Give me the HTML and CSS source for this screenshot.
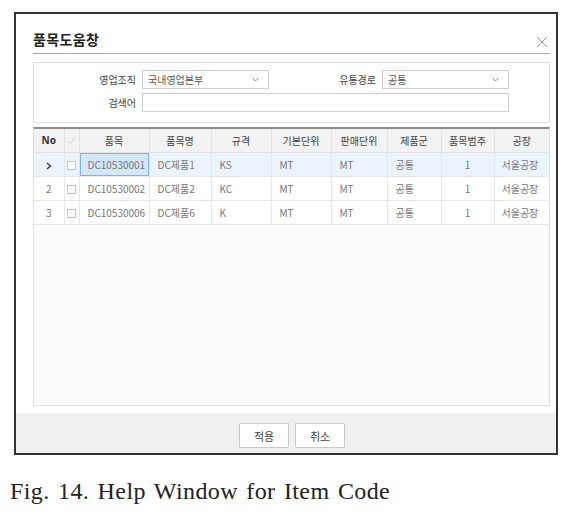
FILE: index.html
```html
<!DOCTYPE html>
<html lang="ko">
<head>
<meta charset="utf-8">
<title>품목도움창</title>
<link rel="stylesheet" href="styles.css">
</head>
<body>
<div class="dialog">
  <div class="head">
    <h1 class="title">품목도움창</h1>
    <svg class="close" width="12" height="12" viewBox="0 0 12 12"><path d="M1 1L11 11M11 1L1 11" stroke="#9a9a9a" stroke-width="1" fill="none"/></svg>
  </div>
  <div class="panel">
    <div class="form">
      <label class="lbl">영업조직</label>
      <div class="select"><span>국내영업본부</span><svg width="7" height="5" viewBox="0 0 7 5"><path d="M0.5 1L3.5 4L6.5 1" stroke="#888" fill="none"/></svg></div>
      <label class="lbl">유통경로</label>
      <div class="select"><span>공통</span><svg width="7" height="5" viewBox="0 0 7 5"><path d="M0.5 1L3.5 4L6.5 1" stroke="#888" fill="none"/></svg></div>
      <label class="lbl">검색어</label>
      <div class="input"></div>
    </div>
  </div>
  <div class="grid">
    <table>
      <colgroup>
        <col class="c-no"><col class="c-chk"><col class="c-code"><col class="c-name"><col class="c-spec"><col class="c-unit"><col class="c-sale"><col class="c-grp"><col class="c-cat"><col class="c-fac">
      </colgroup>
      <thead>
        <tr>
          <th class="no">No</th>
          <th><svg width="9" height="9" viewBox="0 0 9 9"><path d="M1 5L3.5 7.5L8 1" stroke="#d4d4d4" fill="none"/></svg></th>
          <th>품목</th><th>품목명</th><th>규격</th><th>기본단위</th><th>판매단위</th><th>제품군</th><th>품목범주</th><th>공장</th>
        </tr>
      </thead>
      <tbody>
        <tr class="sel">
          <td class="ctr"><svg width="6" height="8" viewBox="0 0 6 8"><path d="M1 1L4.5 4L1 7" stroke="#333" stroke-width="1.4" fill="none"/></svg></td>
          <td class="ctr"><span class="cb"></span></td>
          <td class="focus">DC10530001</td><td>DC제품1</td><td>KS</td><td>MT</td><td>MT</td><td>공통</td><td class="ctr">1</td><td class="fac">서울공장</td>
        </tr>
        <tr>
          <td class="ctr">2</td>
          <td class="ctr"><span class="cb"></span></td>
          <td>DC10530002</td><td>DC제품2</td><td>KC</td><td>MT</td><td>MT</td><td>공통</td><td class="ctr">1</td><td class="fac">서울공장</td>
        </tr>
        <tr>
          <td class="ctr">3</td>
          <td class="ctr"><span class="cb"></span></td>
          <td>DC10530006</td><td>DC제품6</td><td>K</td><td>MT</td><td>MT</td><td>공통</td><td class="ctr">1</td><td class="fac">서울공장</td>
        </tr>
      </tbody>
    </table>
  </div>
  <div class="foot">
    <button class="btn">적용</button>
    <button class="btn">취소</button>
  </div>
</div>
<p class="caption">Fig. 14. Help Window for Item Code</p>
</body>
</html>
```

FILE: styles.css
```css
* { box-sizing: border-box; }
html, body { margin: 0; padding: 0; background: #fff; }
body { font-family: "Noto Sans CJK KR", sans-serif; }

.dialog {
  margin: 12px 0 0 14px;
  width: 544px;
  height: 443px;
  border: 2px solid #333;
  display: flex;
  flex-direction: column;
  background: #fff;
}

.head {
  margin: 0 6px 0 17px;
  padding: 15px 0 4px 0;
  border-bottom: 1px solid #a8a8a8;
  display: flex;
  justify-content: space-between;
  align-items: center;
}
.title {
  margin: 0;
  font-family: "Noto Sans CJK KR", sans-serif;
  font-size: 14px;
  font-weight: 700;
  line-height: 20px;
  color: #222;
  letter-spacing: 0.4px;
}
.close { margin-top: 6px; margin-right: 2px; }

.panel {
  margin: 8px 6px 0 17px;
  border: 1px solid #dedede;
  height: 61px;
  padding-top: 7px;
}
.form {
  display: grid;
  grid-template-columns: 108px 127px 113px 127px;
  grid-template-rows: 19px 19px;
  row-gap: 4px;
}
.lbl {
  font-size: 10px;
  color: #444;
  text-align: right;
  padding-right: 6px;
  line-height: 19px;
}
.select {
  border: 1px solid #cfcfcf;
  background: #fff;
  display: flex;
  align-items: center;
  justify-content: space-between;
  padding: 0 9px 0 5px;
  font-size: 10px;
  color: #555;
}
.input {
  grid-column: 2 / 5;
  border: 1px solid #cfcfcf;
  background: #fff;
}

.grid {
  margin: 4px 6px 7px 17px;
  flex: 1;
  border: 1px solid #e0e0e0;
  border-top: 2px solid #8c8c8c;
  background: #fcfcfc;
}
table {
  width: 100%;
  border-collapse: collapse;
  table-layout: fixed;
  font-family: "Noto Sans CJK KR", sans-serif;
  font-size: 10px;
  color: #777;
}
.c-no { width: 30px; }
.c-chk { width: 15px; }
.c-code { width: 70px; }
.c-name { width: 62px; }
.c-spec { width: 60px; }
.c-unit { width: 60px; }
.c-sale { width: 56px; }
.c-grp { width: 54px; }
.c-cat { width: 53px; }
.c-fac { width: 55px; }

th {
  height: 23px;
  background: #f2f2f2;
  font-weight: 400;
  color: #444;
  text-align: center;
  border-right: 1px solid #e2e2e2;
  border-bottom: 1px solid #e2e2e2;
  padding: 0;
}
th.no { font-family: "Noto Sans", sans-serif; font-weight: 700; font-size: 10px; color: #333; }
th:last-child, td:last-child { border-right: none; }
th svg { display: block; margin: 0 auto; }
td {
  height: 24px;
  background: #fff;
  border-right: 1px solid #e6e6e6;
  border-bottom: 1px solid #e6e6e6;
  padding: 0 0 0 8px;
  white-space: nowrap;
  overflow: hidden;
}
td.ctr { text-align: center; padding: 0; }
td.ctr svg { display: inline-block; vertical-align: middle; }
td.fac { padding-left: 7px; }
tr.sel td { background: #ebf4fd; }
tr.sel td.focus {
  background: #d3e6fa;
  box-shadow: inset 0 0 0 1px #86b1df;
}
.cb {
  display: inline-block;
  width: 9px;
  height: 9px;
  border: 1px solid #c4c4c4;
  background: #fff;
  vertical-align: middle;
}

.foot {
  height: 40px;
  background: #f0f0f0;
  display: flex;
  justify-content: center;
  align-items: flex-start;
  gap: 6px;
  padding: 10px 0 0 12px;
}
.btn {
  width: 50px;
  height: 25px;
  border: 1px solid #c9c9c9;
  background: #fff;
  font-family: "Noto Sans CJK KR", sans-serif;
  font-size: 11px;
  color: #444;
  padding: 0;
  border-radius: 1px;
}

.caption {
  margin: 22px 0 0 10px;
  font-family: "Liberation Serif", serif;
  font-size: 24px;
  line-height: 28px;
  letter-spacing: 0.4px;
  word-spacing: 2px;
  color: #222;
}
```
